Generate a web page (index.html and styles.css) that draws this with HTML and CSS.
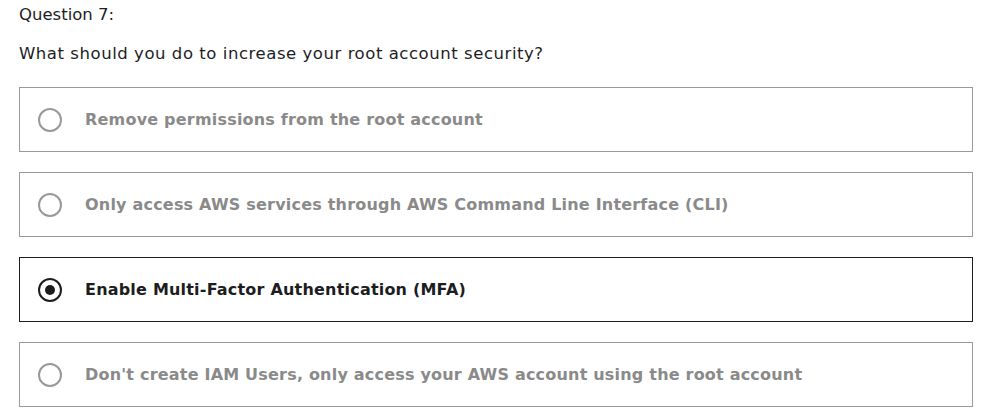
FILE: index.html
```html
<!DOCTYPE html>
<html>
<head>
<meta charset="utf-8">
<link rel="stylesheet" href="styles.css">
</head>
<body>
<div class="quiz">
  <div class="q-num">Question 7:</div>
  <div class="q-text">What should you do to increase your root account security?</div>
  <ul class="options">
    <li class="option"><span class="radio"></span><span class="label">Remove permissions from the root account</span></li>
    <li class="option"><span class="radio"></span><span class="label">Only access AWS services through AWS Command Line Interface (CLI)</span></li>
    <li class="option selected"><span class="radio"></span><span class="label">Enable Multi-Factor Authentication (MFA)</span></li>
    <li class="option"><span class="radio"></span><span class="label">Don't create IAM Users, only access your AWS account using the root account</span></li>
  </ul>
</div>
</body>
</html>
```
FILE: styles.css
```css
html, body { margin: 0; padding: 0; background: #fff; }
body { font-family: "DejaVu Sans", sans-serif; color: #1c1d1f; }
.quiz { padding: 4px 14px 0 19px; }
.q-num { font-size: 16.5px; line-height: 22px; }
.q-text { font-size: 16.5px; line-height: 22px; margin-top: 17px; letter-spacing: 0.55px; }
.options { list-style: none; margin: 22px 0 0 0; padding: 0; display: flex; flex-direction: column; gap: 20px; }
.option { height: 63px; border: 1px solid #9a9a9a; display: flex; align-items: center; padding-left: 18px; }
.radio { width: 20px; height: 20px; border: 2px solid #999; border-radius: 50%; flex: none; display: flex; align-items: center; justify-content: center; }
.label { margin-left: 23px; font-weight: 700; font-size: 16px; color: #8a8a8a; letter-spacing: 0.2px; }
.option.selected { border-color: #1c1d1f; }
.option.selected .radio { border-color: #1c1d1f; }
.option.selected .radio::after { content: ""; width: 10px; height: 10px; border-radius: 50%; background: #1c1d1f; }
.option.selected .label { color: #1c1d1f; }
```
